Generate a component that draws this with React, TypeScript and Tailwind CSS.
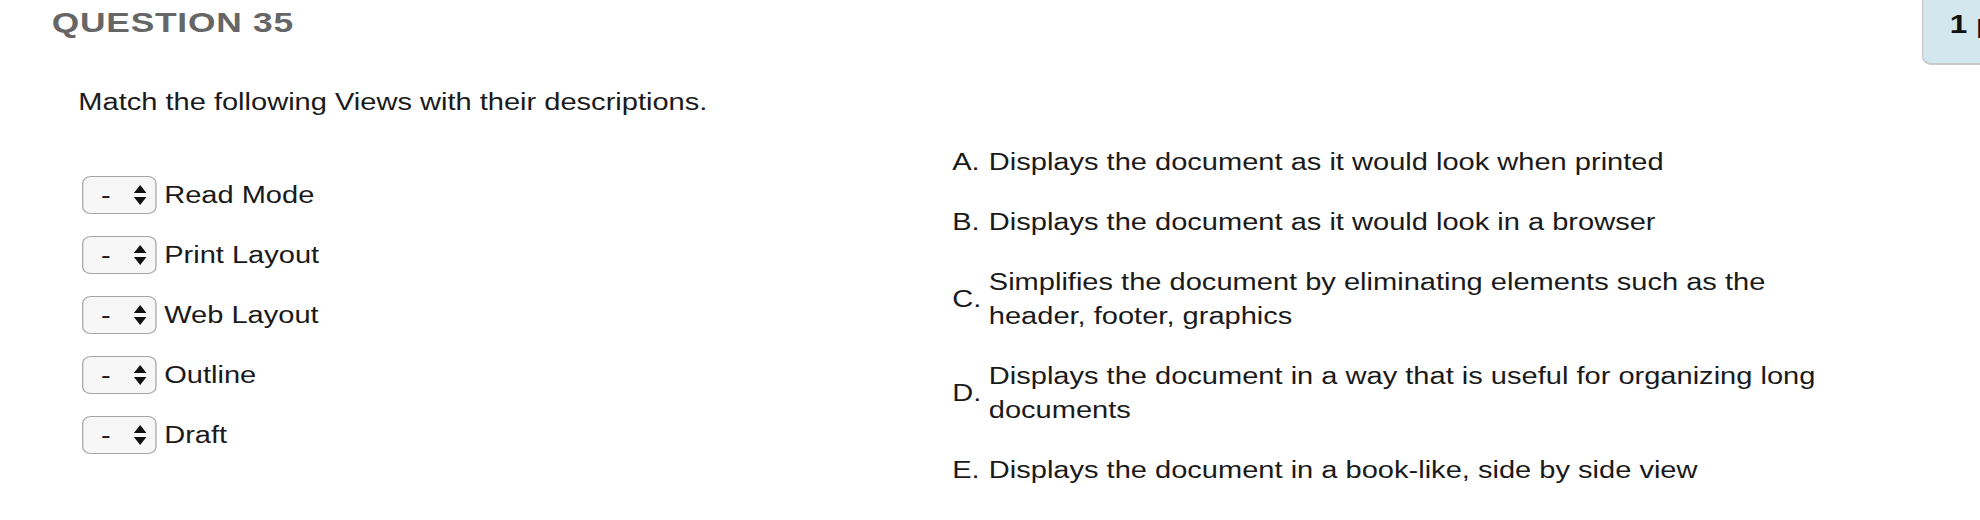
import React from "react";

const leftItems = ["Read Mode", "Print Layout", "Web Layout", "Outline", "Draft"];

const rightItems: { letter: string; lines: string[] }[] = [
  { letter: "A.", lines: ["Displays the document as it would look when printed"] },
  { letter: "B.", lines: ["Displays the document as it would look in a browser"] },
  {
    letter: "C.",
    lines: ["Simplifies the document by eliminating elements such as the", "header, footer, graphics"],
  },
  {
    letter: "D.",
    lines: ["Displays the document in a way that is useful for organizing long", "documents"],
  },
  { letter: "E.", lines: ["Displays the document in a book-like, side by side view"] },
];

function FakeSelect() {
  return (
    <div className="flex h-[38px] w-[59px] shrink-0 items-center rounded-[7px] border border-[#a6a6a6] bg-[#f7f7f7]">
      <span className="ml-[14px] w-[25px] text-[23px] leading-none">-</span>
      <svg width="10" height="20" viewBox="0 0 10 20" className="ml-[1px]">
        <polygon points="5,0 10,8 0,8" fill="#111" />
        <polygon points="0,12 10,12 5,20" fill="#111" />
      </svg>
    </div>
  );
}

export default function App() {
  return (
    <div className="h-[520px] w-[1980px] overflow-hidden bg-white">
      <div className="h-[520px] w-[1568px] origin-top-left scale-x-[1.2628] font-['Liberation_Sans',Arial,sans-serif] text-[#1a1a1a]">
        <div className="flex items-start">
          <h2 className="ml-[41px] mt-[7px] text-[28px] font-bold leading-[32px] tracking-[0.6px] text-[#666666]">
            QUESTION 35
          </h2>
          <div className="ml-auto mr-[-74px] mt-[-10px] h-[75px] w-[120px] shrink-0 rounded-bl-[8px] border border-b-2 border-[#c8c8c8] bg-[#d3e7ee] pl-[21px] pt-[18px] text-[25px] font-bold leading-[30px] text-[#111]">
            1 points
          </div>
        </div>

        <div className="pl-[62px]">
          <p className="mt-[24px] text-[23px] leading-[26px]">Match the following Views with their descriptions.</p>

          <div className="mt-[30px] flex">
            <div className="flex w-[692px] flex-col gap-[22px] pl-[3px] pt-[31px]">
              {leftItems.map((t) => (
                <div key={t} className="flex items-center">
                  <FakeSelect />
                  <span className="ml-[6px] text-[23px] leading-[26px]">{t}</span>
                </div>
              ))}
            </div>

            <div className="flex flex-col gap-[26px]">
              {rightItems.map((it) => (
                <div key={it.letter} className="flex items-center">
                  <span className="w-[29px] shrink-0 text-[23px] leading-[34px]">{it.letter}</span>
                  <div className="text-[23px] leading-[34px]">
                    {it.lines.map((l) => (
                      <div key={l}>{l}</div>
                    ))}
                  </div>
                </div>
              ))}
            </div>
          </div>
        </div>
      </div>
    </div>
  );
}
